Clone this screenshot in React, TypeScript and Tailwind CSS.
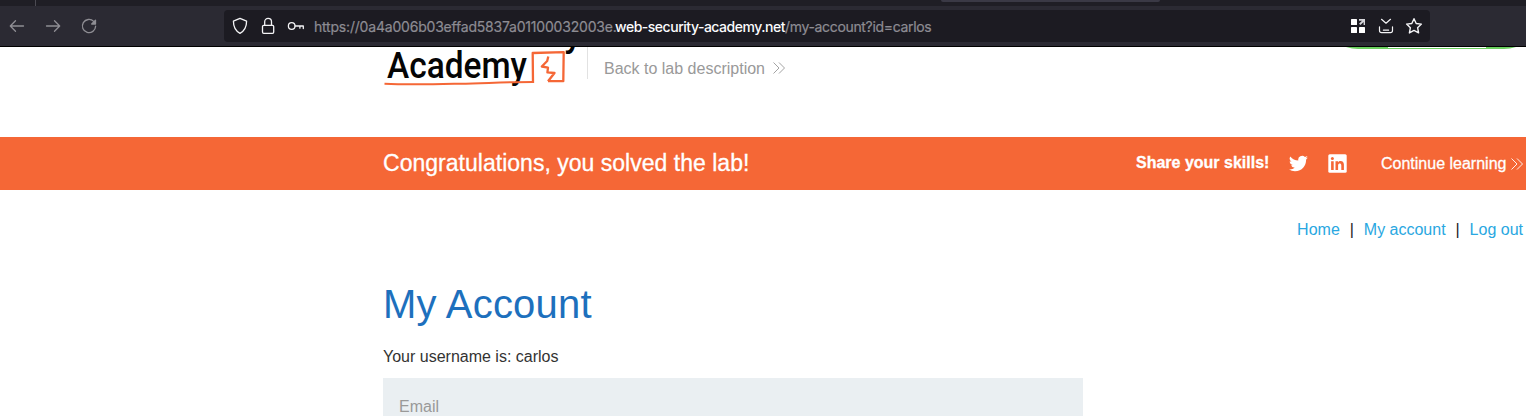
import React from "react";

function Chevrons({ className }: { className: string }) {
  return (
    <svg viewBox="0 0 12 12" className={className} fill="none" stroke="currentColor" strokeWidth="0.9">
      <path d="M0.5 0.5 6 6 0.5 11.5M6 0.5 11.5 6 6 11.5" />
    </svg>
  );
}

function BrowserBar() {
  return (
    <div className="flex h-[47px] flex-col border-b border-black bg-[#2b2a33]">
      <div className="flex h-[6px] shrink-0 items-start bg-[#1f1e25]">
        <div className="ml-[35px] h-[6px] w-px bg-[#4b4a52]" />
        <div className="ml-[905px] h-[2px] w-[219px] rounded-b-[2px] bg-[#3a3945]" />
      </div>
      <div className="flex h-[40px] items-center">
        <svg className="h-[40px] w-[224px] shrink-0" viewBox="0 0 224 40" fill="none" stroke="#8f8e94" strokeWidth="1.3" strokeLinecap="round" strokeLinejoin="round">
          <path d="M10.5 20H23.5M15.5 14.8 10.3 20 15.5 25.2" />
          <path d="M46.5 20H59.5M54.5 14.8 59.7 20 54.5 25.2" />
          <path d="M93.7 15.4A6.6 6.6 0 1 0 95.6 20.2" />
          <path d="M95.5 14.2V18H91.7Z" fill="#8f8e94" />
        </svg>
        <div className="flex h-[32px] w-[1206px] items-center rounded-[4px] bg-[#1c1b22] font-['Inter','Liberation_Sans',sans-serif] text-[14px] leading-[32px]">
          <svg className="h-[32px] w-[90px] shrink-0" viewBox="0 0 90 32" fill="none" stroke="#f4f4f6" strokeWidth="1.3" strokeLinejoin="round" strokeLinecap="round">
            <path d="M16 8.4 22.6 11.1C22.6 16.8 20.2 21.2 16 23.4 11.8 21.2 9.4 16.8 9.4 11.1Z" />
            <rect x="38.5" y="15.3" width="11.2" height="8" rx="1.2" />
            <path d="M40.7 15.2V11.8a3.4 3.4 0 0 1 6.8 0V15.2" />
            <circle cx="67.7" cy="16" r="3.3" />
            <path d="M71.2 16H79.3V18.6M75.9 16V18.2" />
          </svg>
          <span className="w-[301px] whitespace-nowrap pt-[2px] tracking-[-0.2px] text-[#8d8c93] [-webkit-text-stroke:0.2px_#8d8c93]">https://0a4a006b03effad5837a01100032003e.</span>
          <span className="w-[170px] whitespace-nowrap pt-[2px] font-medium tracking-[-0.48px] text-[#fbfbfe]">web-security-academy.net</span>
          <span className="w-[146px] whitespace-nowrap pt-[2px] tracking-[-0.33px] text-[#8d8c93] [-webkit-text-stroke:0.2px_#8d8c93]">/my-account?id=carlos</span>
          <svg className="ml-auto h-[32px] w-[90px] shrink-0" viewBox="0 0 90 32" fill="none" stroke="#f4f4f6" strokeWidth="1.2" strokeLinejoin="round" strokeLinecap="round">
            <g fill="#fff" stroke="none">
              <rect x="11" y="9" width="6" height="6" rx=".6" />
              <rect x="11" y="17" width="6" height="6" rx=".6" />
              <rect x="19" y="17" width="6" height="6" rx=".6" />
              <path d="M19 9H25V15H23.6V12L20.5 15 19 13.7 22 10.7H19Z" fill="#d5d5da" />
            </g>
            <path d="M41.5 9.3 46 13.2 50.5 9.3M39.5 16.8V20.6Q39.5 22.7 41.6 22.7H50.4Q52.5 22.7 52.5 20.6V16.8M43.4 20.2H48.6" />
            <path d="M74 8.7 76.2 13.5 81.4 14.1 77.6 17.7 78.6 22.9 74 20.4 69.4 22.9 70.4 17.7 66.6 14.1 71.8 13.5Z" strokeWidth="1.4" />
          </svg>
        </div>
      </div>
    </div>
  );
}

function AcademyLogo() {
  return (
    <svg className="h-[43px] w-[204px] shrink-0" viewBox="383 47 204 43">
      <g fill="#050505" fontFamily="Roboto, 'Liberation Sans', sans-serif" fontSize="37" fontWeight="500">
        <text x="387" y="78" textLength="140" lengthAdjust="spacingAndGlyphs">Academy</text>
        <text x="564" y="46" textLength="18" lengthAdjust="spacingAndGlyphs">y</text>
      </g>
      <g fill="none" stroke="#f56736" strokeLinejoin="round">
        <path d="M384.5 83.8C410 85 430 84.4 460 83.7S510 82 533 82" strokeWidth="2" />
        <path d="M533 83 532.7 53 563.7 52.2 563.3 81.2 548 81.2" strokeWidth="2.3" />
        <path d="M548.3 56.5 547.2 61 541.8 66.5 548 67.7 547.4 72.3 554.5 73 548 81.2" strokeWidth="2.3" />
      </g>
    </svg>
  );
}

function Banner() {
  return (
    <section className="flex h-[53px] items-center bg-[#f56736] pl-[383px] text-white">
      <h4 className="w-[753px] whitespace-nowrap text-[23px] tracking-[0.02px] [-webkit-text-stroke:0.3px_white]">Congratulations, you solved the lab!</h4>
      <span className="w-[153px] whitespace-nowrap pb-[2px] text-[16px] font-bold [-webkit-text-stroke:0.3px_white]">Share your skills!</span>
      <svg className="h-[19px] w-[19px] shrink-0" viewBox="0 0 24 24" fill="currentColor">
        <path d="M23.95 4.57a10 10 0 0 1-2.82.78 4.96 4.96 0 0 0 2.16-2.73c-.95.56-2 .96-3.13 1.19a4.92 4.92 0 0 0-8.38 4.48A13.93 13.93 0 0 1 1.64 3.16a4.92 4.92 0 0 0 1.52 6.57 4.9 4.9 0 0 1-2.23-.61v.06a4.92 4.92 0 0 0 3.95 4.83 5 5 0 0 1-2.21.08 4.94 4.94 0 0 0 4.6 3.42A9.87 9.87 0 0 1 0 19.54a13.94 13.94 0 0 0 7.55 2.21c9.05 0 14-7.5 14-13.98 0-.21 0-.42-.02-.63a9.94 9.94 0 0 0 2.42-2.57z" />
      </svg>
      <svg className="ml-[20px] h-[19px] w-[19px] shrink-0" viewBox="0 0 19 19">
        <rect x=".3" y=".3" width="18.4" height="18.4" rx="1.5" fill="#fff" />
        <g fill="#f56736">
          <circle cx="4.4" cy="4.4" r="1.5" />
          <path d="M3.1 7.2H5.7V16H3.1ZM7.5 7.2H10V8.4C11.3 6.4 15.9 6.4 15.9 10.6V16H13.3V11.2C13.3 8.7 10.1 8.9 10.1 11.2V16H7.5Z" />
        </g>
      </svg>
      <span className="ml-[34px] w-[130px] whitespace-nowrap text-[16px] [-webkit-text-stroke:0.3px_white]">Continue learning</span>
      <Chevrons className="h-[12px] w-[12px] shrink-0" />
    </section>
  );
}

export default function App() {
  return (
    <div className="h-[416px] overflow-hidden bg-white font-['Liberation_Sans',Arial,sans-serif] text-[16px] text-[#333332]">
      <BrowserBar />
      <header className="flex h-[90px] items-start pl-[383px]">
        <AcademyLogo />
        <div className="h-[32px] w-px bg-[#e2e2e2]" />
        <a className="ml-[16px] flex h-[42px] items-center text-[#999]">
          <span className="w-[169px] whitespace-nowrap pt-[2px]">Back to lab description</span>
          <Chevrons className="h-[12px] w-[12px]" />
        </a>
        <svg className="ml-auto mr-[10px] h-[3px] w-[170px]" viewBox="0 0 170 3">
          <path d="M0 0H170Q164 2 158 2H12Q6 2 0 0Z" fill="#6bd05f" />
          <rect x="42" width="98" height="1" fill="#fff" />
        </svg>
      </header>
      <Banner />
      <nav className="flex h-[80px] items-center justify-end pr-[3px] text-[#29a7e1]">
        <a>Home</a>
        <span className="w-[24px] text-center text-[#222]">|</span>
        <a>My account</a>
        <span className="w-[24px] text-center text-[#222]">|</span>
        <a>Log out</a>
      </nav>
      <main className="pl-[383px]">
        <h1 className="h-[69px] whitespace-nowrap pt-[10px] text-[40px] leading-[48px] tracking-[0.2px] text-[#1d70bd]">My Account</h1>
        <p className="h-[39px] pt-[6px] leading-[24px]">Your username is: carlos</p>
        <div className="h-[56px] w-[700px] bg-[#eaeff2] px-[16px] leading-[57px] text-[#999]">Email</div>
      </main>
    </div>
  );
}
